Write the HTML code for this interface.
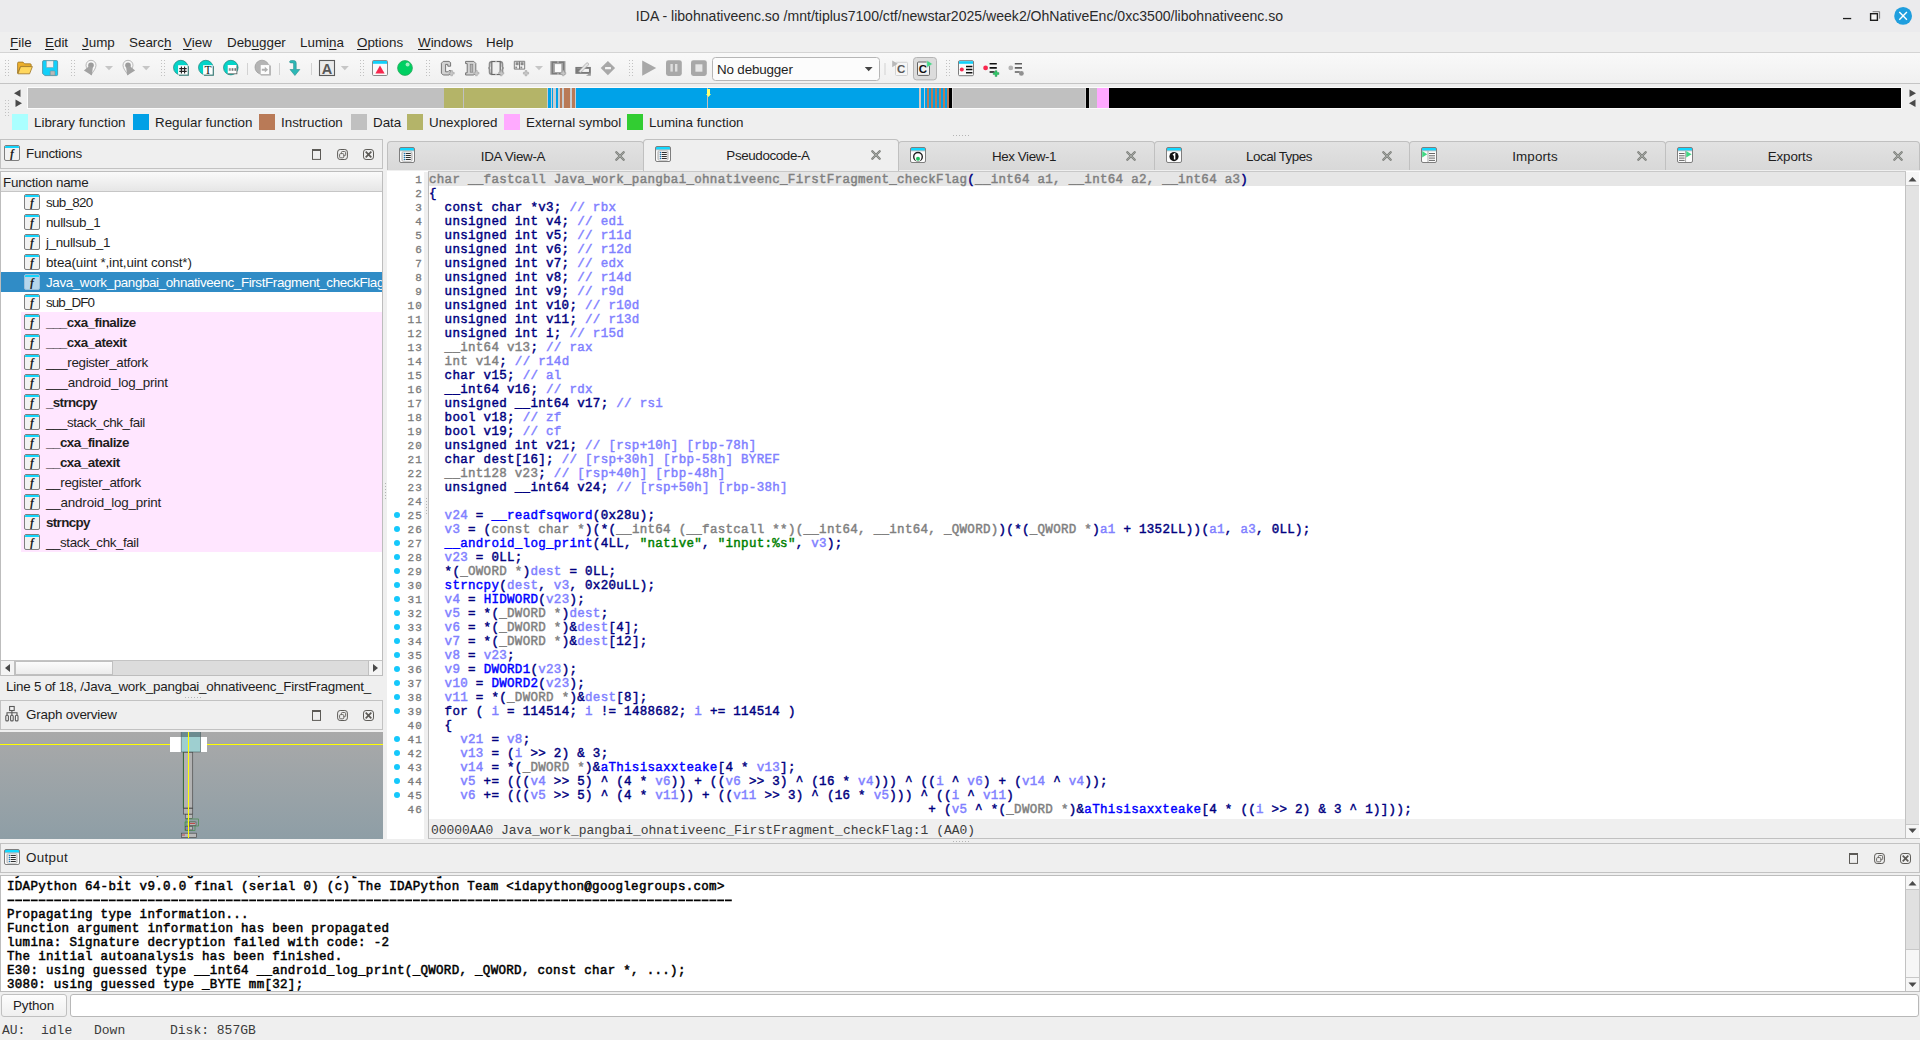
<!DOCTYPE html>
<html><head><meta charset="utf-8"><title>IDA</title>
<style>
*{box-sizing:border-box;margin:0;padding:0}
html,body{width:1920px;height:1040px;overflow:hidden;background:#efefef}
body{position:relative;font-family:"Liberation Sans",sans-serif;font-size:13px;color:#232323}
.a{position:absolute}
div,span,i,b,u,svg{position:absolute}
span{position:static}
.t{white-space:pre;line-height:16px;height:16px;margin-top:1px}
/* title */
#title{left:0;top:0;width:1920px;height:32px;background:#ebebed}
#title .t{left:0;width:1919px;text-align:center;top:7px;font-size:14.07px;color:#2a2a2a}
/* menu */
#menu{left:0;top:32px;width:1920px;height:20px;background:#efefef}
#menu .t{top:2px;font-size:13.4px;color:#1e1e1e}
#menu u{position:static;text-decoration:underline;text-underline-offset:1.5px;text-decoration-thickness:1.4px}
/* toolbar */
#tb{left:0;top:52px;width:1920px;height:32px;background:linear-gradient(#f9f9f9,#f0f0f0);border-top:1px solid #d4d4d4;border-bottom:1px solid #c4c4c4}
.grip{width:4px;height:18px;top:59px;background-image:radial-gradient(circle,#b8b8b8 0.7px,transparent 0.9px);background-size:2px 2px}
.vsep{width:1px;height:18px;top:59px;background:#c8c8c8}
.dd{width:0;height:0;border-left:3.5px solid transparent;border-right:3.5px solid transparent;border-top:4px solid #c4c4c4;top:67px}
/* nav */
#nav{left:28px;top:88px;width:1873px;height:20px;background:#000}
#nav div{top:0;height:20px}
.sw{width:16px;height:16px;top:114px}
.lg{top:114px;font-size:13.4px;color:#1e1e1e}
/* dock titles */
.dt{background:#efefef;border:1px solid #c2c2c2;height:30px}
.dt .t{left:25px;top:5px;font-size:13.4px;color:#1e1e1e}
/* functions */
#fl{left:0;top:171px;width:383px;height:505px;background:#fff;border:1px solid #bdbdbd;overflow:hidden}
#fh{left:0;top:0;width:381px;height:20px;background:linear-gradient(#fafafa,#f0f0f0 50%,#e6e6e6);border-bottom:1px solid #c6c6c6}
#fh .t{left:2px;top:2px;font-size:13.4px;color:#1e1e1e}
.fr{left:1px;width:381px;height:20px}
.fr.pk{background:linear-gradient(90deg,#fff 20px,#ffe6ff 20px)}
.fr.sel{background:#308cc6}
.fi{left:23px;top:2px;width:16px;height:16px;border:1px solid #7e7e7e;border-radius:2px;background:#f2f2f2;overflow:hidden}
.fi b{left:0;top:0;width:14px;height:2.4px;background:#14d4fc}
.fi u{left:0;top:2px;width:14px;text-align:center;text-decoration:none;font-family:"Liberation Serif",serif;font-style:italic;font-weight:bold;font-size:11.5px;line-height:12px;color:#222}
.fr.sel .fi{background:#b6d6ec;border-color:#9cc0da}
.ft{position:absolute;left:45px;top:3px;white-space:pre;line-height:16px;font-size:13.4px;color:#1e1e1e}
.ft.bd{font-weight:bold}
.fr.sel .ft{color:#fff}
/* code */
#cv{left:387px;top:171px;width:1533px;height:668px;background:#fff}
.hl{left:429px;width:1476px;height:14px;background:#e6e6e6}
.ln{left:386px;margin-top:1.3px;width:37px;text-align:right;height:14px;line-height:14px;font-family:"Liberation Mono",monospace;font-size:11px;letter-spacing:1.2px;color:#7a7a7a;-webkit-text-stroke:0.3px}
.dot{left:394px;width:6px;height:6px;border-radius:3px;background:#14c8fc}
.cl{left:429px;margin-top:1px;height:14px;line-height:14px;font-family:"Liberation Mono",monospace;font-size:12.5px;letter-spacing:0.3px;white-space:pre;font-weight:normal;-webkit-text-stroke:0.45px}
.k{color:#000080}.g{color:#808080}.c,.v{color:#8080ff}.f{color:#0000ff}.s{color:#008000}
/* output */
#ov{left:1px;top:876px;width:1904px;height:115px;background:#fff;overflow:hidden}
.ol{left:6px;height:14px;line-height:14px;font-family:"Liberation Mono",monospace;font-size:12.5px;letter-spacing:0.3px;-webkit-text-stroke:0.5px;color:#000;white-space:pre}
.mono{font-family:"Liberation Mono",monospace;font-size:13px;white-space:pre;line-height:14px}
/* scrollbars */
.sbv{width:14px;background:#e3e3e3;border-left:1px solid #c2c2c2}
.tab{top:141px;height:29px;background:linear-gradient(#e2e2e2,#d8d8d8);border:1px solid #c0c0c0;border-bottom:none;border-radius:4px 4px 0 0}
.tab.act{top:139px;height:32px;background:#efefef}
.tab .t{font-size:13.4px;color:#1e1e1e;top:7px;text-align:center;width:140px}
.tab.act .t{top:9px}
#dtF{letter-spacing:-0.229px}#fhn{letter-spacing:-0.237px}#dtG{letter-spacing:-0.213px}#dtO{letter-spacing:0.299px}#py{letter-spacing:-0.117px}#fstat{letter-spacing:-0.223px}#tab0{letter-spacing:-0.298px}#tab1{letter-spacing:-0.379px}#tab2{letter-spacing:-0.423px}#tab3{letter-spacing:-0.474px}#tab4{letter-spacing:0.135px}#tab5{letter-spacing:-0.101px}#nodbg{letter-spacing:-0.158px}</style></head><body>

<!-- ===== title bar ===== -->
<div id="title"><div class="t" id="ttl">IDA - libohnativeenc.so /mnt/tiplus7100/ctf/newstar2025/week2/OhNativeEnc/0xc3500/libohnativeenc.so</div>
<svg style="left:1836px;top:0px" width="84" height="32" viewBox="1836 0 84 32">
<rect x="1843" y="17.9" width="8.2" height="1.3" fill="#1e1e1e"/>
<path d="M1872.6 11.7h7v7" fill="none" stroke="#7a7a7a" stroke-width="1"/>
<rect x="1870.6" y="13.7" width="6.8" height="6.6" fill="#f6f6f6" stroke="#1e1e1e" stroke-width="1.4"/>
<circle cx="1903.1" cy="15.9" r="8.9" fill="#1f9ede"/><path d="M1899.3 12.1l7.6 7.6M1906.9 12.1l-7.6 7.6" stroke="#fff" stroke-width="1.4"/>
</svg></div>

<!-- ===== menu ===== -->
<div id="menu">
<div class="t" style="left:10px"><u>F</u>ile</div>
<div class="t" style="left:45px"><u>E</u>dit</div>
<div class="t" style="left:82px"><u>J</u>ump</div>
<div class="t" style="left:129px">Searc<u>h</u></div>
<div class="t" style="left:183px"><u>V</u>iew</div>
<div class="t" style="left:227px">Deb<u>u</u>gger</div>
<div class="t" style="left:300px">Lumi<u>n</u>a</div>
<div class="t" style="left:357px"><u>O</u>ptions</div>
<div class="t" style="left:418px"><u>W</u>indows</div>
<div class="t" style="left:486px">Help</div>
</div>

<!-- ===== toolbar ===== -->
<div id="tb"></div>
<svg style="left:0;top:53px" width="1040" height="31" viewBox="0 53 1040 31"><rect x="5" y="60" width="1" height="1" fill="#c2c2c2"/><rect x="8" y="60" width="1" height="1" fill="#c2c2c2"/><rect x="5" y="63" width="1" height="1" fill="#c2c2c2"/><rect x="8" y="63" width="1" height="1" fill="#c2c2c2"/><rect x="5" y="66" width="1" height="1" fill="#c2c2c2"/><rect x="8" y="66" width="1" height="1" fill="#c2c2c2"/><rect x="5" y="69" width="1" height="1" fill="#c2c2c2"/><rect x="8" y="69" width="1" height="1" fill="#c2c2c2"/><rect x="5" y="72" width="1" height="1" fill="#c2c2c2"/><rect x="8" y="72" width="1" height="1" fill="#c2c2c2"/><rect x="5" y="75" width="1" height="1" fill="#c2c2c2"/><rect x="8" y="75" width="1" height="1" fill="#c2c2c2"/><path d="M17.6 73.3V63.2q0-1.1 1.1-1.1h4.3l1.6 1.7h5.6q1 0 1 1v1.6H20.6z" fill="#edb02c" stroke="#9c7424" stroke-width="0.8"/><path d="M17.9 73.8L20.6 66.6H32.4L29.6 73.8z" fill="#ffd75e" stroke="#9c7424" stroke-width="0.8" stroke-linejoin="round"/><path d="M42.6 61.8q0-1.2 1.2-1.2h12.6q1.2 0 1.2 1.2v12.6q0 1.2-1.2 1.2H45l-2.4-2z" fill="#12d0fa" stroke="#4d96ac" stroke-width="0.9"/><rect x="46.3" y="60.9" width="7" height="6.6" fill="#f0f0f0" stroke="#7a9aa4" stroke-width="0.5"/><rect x="50.2" y="70.9" width="4.8" height="4.4" rx="0.6" fill="#b8b8b8" stroke="#6f8f99" stroke-width="0.6"/><rect x="71" y="60" width="1" height="1" fill="#c2c2c2"/><rect x="74" y="60" width="1" height="1" fill="#c2c2c2"/><rect x="71" y="63" width="1" height="1" fill="#c2c2c2"/><rect x="74" y="63" width="1" height="1" fill="#c2c2c2"/><rect x="71" y="66" width="1" height="1" fill="#c2c2c2"/><rect x="74" y="66" width="1" height="1" fill="#c2c2c2"/><rect x="71" y="69" width="1" height="1" fill="#c2c2c2"/><rect x="74" y="69" width="1" height="1" fill="#c2c2c2"/><rect x="71" y="72" width="1" height="1" fill="#c2c2c2"/><rect x="74" y="72" width="1" height="1" fill="#c2c2c2"/><rect x="71" y="75" width="1" height="1" fill="#c2c2c2"/><rect x="74" y="75" width="1" height="1" fill="#c2c2c2"/><path d="M91 60.3c-3 0-5 2.2-5 5 0 3 2.5 6 5 9.4 2.5-3.4 5-6.4 5-9.4 0-2.8-2-5-5-5z" fill="#f6f6f6" stroke="#a8a8a8" stroke-width="0.8"/><circle cx="91" cy="65.3" r="2.8" fill="#9c9c9c"/><path d="M89.2 66l3.6 1.2 -0.9 8.2 -8 -5z" fill="#a2a2a2"/><path d="M105 66h8l-4 4.3z" fill="#c6c6c6"/><path d="M128 60.3c-3 0-5 2.2-5 5 0 3 2.5 6 5 9.4 2.5-3.4 5-6.4 5-9.4 0-2.8-2-5-5-5z" fill="#f6f6f6" stroke="#a8a8a8" stroke-width="0.8"/><circle cx="128" cy="65.3" r="2.8" fill="#9c9c9c"/><path d="M129.8 66l-3.6 1.2 0.9 8.2 8 -5z" fill="#a2a2a2"/><path d="M142.2 66h8l-4 4.3z" fill="#c6c6c6"/><rect x="161" y="60" width="1" height="1" fill="#c2c2c2"/><rect x="164" y="60" width="1" height="1" fill="#c2c2c2"/><rect x="161" y="63" width="1" height="1" fill="#c2c2c2"/><rect x="164" y="63" width="1" height="1" fill="#c2c2c2"/><rect x="161" y="66" width="1" height="1" fill="#c2c2c2"/><rect x="164" y="66" width="1" height="1" fill="#c2c2c2"/><rect x="161" y="69" width="1" height="1" fill="#c2c2c2"/><rect x="164" y="69" width="1" height="1" fill="#c2c2c2"/><rect x="161" y="72" width="1" height="1" fill="#c2c2c2"/><rect x="164" y="72" width="1" height="1" fill="#c2c2c2"/><rect x="161" y="75" width="1" height="1" fill="#c2c2c2"/><rect x="164" y="75" width="1" height="1" fill="#c2c2c2"/><circle cx="180.8" cy="67.6" r="7.3" fill="#04d4c8" stroke="#1b7f78" stroke-width="0.7"/><rect x="178.9" y="66.2" width="10" height="9.6" fill="#3c7d78"/><rect x="178.1" y="65.2" width="9.6" height="9.4" fill="#fefefe"/><path d="M181.4 66.6v6.8M184.6 66.6v6.8M179.3 68.6h7.4M179.3 71.4h7.4" stroke="#222" stroke-width="1.1" fill="none"/><circle cx="205.8" cy="67.6" r="7.3" fill="#04d4c8" stroke="#1b7f78" stroke-width="0.7"/><rect x="203.9" y="66.2" width="10" height="9.6" fill="#3c7d78"/><rect x="203.1" y="65.2" width="9.6" height="9.4" fill="#fefefe"/><text x="208" y="74" font-family="Liberation Serif" font-size="11.5" text-anchor="middle" fill="#111">T</text><circle cx="230.8" cy="67.6" r="7.3" fill="#04d4c8" stroke="#1b7f78" stroke-width="0.7"/><rect x="227.9" y="65.6" width="9.4" height="8.6" fill="#4a5a58"/><rect x="227.7" y="65" width="8.8" height="8.4" fill="#fefefe"/><path d="M229.3 68.2v2.6M230.9 68.2v2.6M232.5 68.2v2.6M234.1 68.2v2.6M235.5 68.2v2.6" stroke="#777" stroke-width="1"/><rect x="247" y="63" width="1" height="12" fill="#d2d2d2"/><circle cx="262" cy="67.2" r="7" fill="#b4b4b4" stroke="#a0a0a0" stroke-width="0.8"/><rect x="260.8" y="65.5" width="10" height="10" fill="#a8a8a8"/><rect x="260.3" y="64.8" width="9.2" height="9.6" fill="#fdfdfd" stroke="#aaa" stroke-width="0.5"/><path d="M261.8 68.7h3v-1.9l3.3 2.9-3.3 2.9v-1.9h-3z" fill="#b0b0b0"/><rect x="279" y="63" width="1" height="12" fill="#d2d2d2"/><path d="M289.6 61.4q0.8-1.2 2.2-0.9h1.8q2.6 0 2.6 2.6v6.4h3.6l-4.9 6-4.9-6h3.6v-5.6q0-1-1-1h-1.6q-1.6 0-1.4-1.5z" fill="#2cb8b6" stroke="#2a8f8d" stroke-width="0.6"/><rect x="311" y="63" width="1" height="12" fill="#d2d2d2"/><rect x="319.5" y="60.5" width="15" height="15" fill="#ebebeb" stroke="#5a5a5a" stroke-width="1.1"/><text x="327" y="73.6" font-family="Liberation Sans" font-size="14.5" font-weight="bold" text-anchor="middle" fill="#585858">A</text><path d="M340.8 66h8l-4 4.3z" fill="#c6c6c6"/><rect x="360" y="60" width="1" height="1" fill="#c2c2c2"/><rect x="363" y="60" width="1" height="1" fill="#c2c2c2"/><rect x="360" y="63" width="1" height="1" fill="#c2c2c2"/><rect x="363" y="63" width="1" height="1" fill="#c2c2c2"/><rect x="360" y="66" width="1" height="1" fill="#c2c2c2"/><rect x="363" y="66" width="1" height="1" fill="#c2c2c2"/><rect x="360" y="69" width="1" height="1" fill="#c2c2c2"/><rect x="363" y="69" width="1" height="1" fill="#c2c2c2"/><rect x="360" y="72" width="1" height="1" fill="#c2c2c2"/><rect x="363" y="72" width="1" height="1" fill="#c2c2c2"/><rect x="360" y="75" width="1" height="1" fill="#c2c2c2"/><rect x="363" y="75" width="1" height="1" fill="#c2c2c2"/><rect x="372.5" y="60.5" width="15" height="15" rx="1.2" fill="#fafafa" stroke="#7c7c7c" stroke-width="0.9"/><rect x="373" y="61" width="14" height="2.8" fill="#12d0fa"/><path d="M380 65.6l4.6 8h-9.2z" fill="#f8284e"/><circle cx="405" cy="68" r="7.4" fill="#00d062" stroke="#2aa85c" stroke-width="0.8"/><circle cx="407.6" cy="64.6" r="2" fill="#a0f0c0"/><rect x="426" y="60" width="1" height="1" fill="#c2c2c2"/><rect x="429" y="60" width="1" height="1" fill="#c2c2c2"/><rect x="426" y="63" width="1" height="1" fill="#c2c2c2"/><rect x="429" y="63" width="1" height="1" fill="#c2c2c2"/><rect x="426" y="66" width="1" height="1" fill="#c2c2c2"/><rect x="429" y="66" width="1" height="1" fill="#c2c2c2"/><rect x="426" y="69" width="1" height="1" fill="#c2c2c2"/><rect x="429" y="69" width="1" height="1" fill="#c2c2c2"/><rect x="426" y="72" width="1" height="1" fill="#c2c2c2"/><rect x="429" y="72" width="1" height="1" fill="#c2c2c2"/><rect x="426" y="75" width="1" height="1" fill="#c2c2c2"/><rect x="429" y="75" width="1" height="1" fill="#c2c2c2"/><path d="M443.2 61.4h5.8l1.6 1.2v3.6h-2.8v-1.8h-2.2v7.4h2.2l1.2-1.2h1.8v2.8l-1.6 1.6h-6l-1.8-1.8v-10z" fill="#d2d2d2" stroke="#6a6a6a" stroke-width="0.9" stroke-linejoin="round"/><path d="M449 72.3h1.7v-1.7h1.8v1.7h1.7v1.8h-1.7v1.7h-1.8v-1.7h-1.7z" fill="#c8c8c8" stroke="#9a9a9a" stroke-width="0.5"/><path d="M465.6 61.4h8.2l2 2v9.6l-2 2h-8.2v-2.2h1.6v-9.2h-1.6z" fill="#d2d2d2" stroke="#6a6a6a" stroke-width="0.9" stroke-linejoin="round"/><rect x="470.2" y="64.2" width="2.6" height="8" fill="#b4b4b4" stroke="#7a7a7a" stroke-width="0.6"/><path d="M473.8 72.3h1.7v-1.7h1.8v1.7h1.7v1.8h-1.7v1.7h-1.8v-1.7h-1.7z" fill="#c8c8c8" stroke="#9a9a9a" stroke-width="0.5"/><path d="M491.6 61.6q-2 0.4-2 2.4v2.4q0 1.4-1.2 1.6 1.2 0.2 1.2 1.6v2.4q0 2 2 2.4M500.4 61.6q2 0.4 2 2.4v2.4q0 1.4 1.2 1.6-1.2 0.2-1.2 1.6v2.4q0 2-2 2.4" fill="none" stroke="#8e8e8e" stroke-width="1.8"/><rect x="491.8" y="61.5" width="8.4" height="13" fill="#f0f0f0" stroke="#666" stroke-width="1.2"/><path d="M495.4 61.5h1.2M495.4 74.5h1.2" stroke="#d0d0d0" stroke-width="1.2"/><path d="M498.6 72.3h1.7v-1.7h1.8v1.7h1.7v1.8h-1.7v1.7h-1.8v-1.7h-1.7z" fill="#c8c8c8" stroke="#9a9a9a" stroke-width="0.5"/><path d="M514.3 61.3h10.4v7.8h-10.4zM519.5 61.3v7.8" fill="#f4f4f4" stroke="#7e7e7e" stroke-width="1"/><rect x="515.6" y="62.2" width="3" height="3" fill="#8a8a8a"/><rect x="520.6" y="62.2" width="3" height="3" fill="#8a8a8a"/><rect x="515.3" y="66.6" width="1.8" height="1.8" fill="#8a8a8a"/><rect x="520.4" y="66.6" width="1.8" height="1.8" fill="#8a8a8a"/><path d="M523.4 72.3h1.7v-1.7h1.8v1.7h1.7v1.8h-1.7v1.7h-1.8v-1.7h-1.7z" fill="#c8c8c8" stroke="#9a9a9a" stroke-width="0.5"/><path d="M535 66h8l-4 4.3z" fill="#c6c6c6"/><rect x="550.3" y="61.1" width="15.2" height="13.6" fill="#a4a4a4"/><path d="M557 62.2h-4.6v11.4h4.6M559 62.2h4.6v11.4h-4.6" fill="none" stroke="#7c7c7c" stroke-width="1.4"/><rect x="554.9" y="64.1" width="6.4" height="7.9" fill="#fbfbfb"/><path d="M560.6 72.3h1.7v-1.7h1.8v1.7h1.7v1.8h-1.7v1.7h-1.8v-1.7h-1.7z" fill="#c8c8c8" stroke="#9a9a9a" stroke-width="0.5"/><rect x="576.3" y="67.9" width="13.6" height="5" fill="#f4f4f4" stroke="#7a7a7a" stroke-width="1.9"/><path d="M576 69h6v4h-6z" fill="#7a7a7a"/><path d="M578.6 71.4l7.6-8.2q1-0.9 2 0 0.9 1 0 2l-7.4 7.4z" fill="#e4e4e4" stroke="#a4a4a4" stroke-width="0.7"/><path d="M590.9 72.6v3.2h-5z" fill="#9a9a9a"/><path d="M607.9 60.9l7.2 7.2-7.2 7.2-7.2-7.2z" fill="#a8a8a8"/><rect x="605" y="67" width="6" height="2.2" rx="0.5" fill="#f4f4f4"/><rect x="629" y="60" width="1" height="1" fill="#c2c2c2"/><rect x="632" y="60" width="1" height="1" fill="#c2c2c2"/><rect x="629" y="63" width="1" height="1" fill="#c2c2c2"/><rect x="632" y="63" width="1" height="1" fill="#c2c2c2"/><rect x="629" y="66" width="1" height="1" fill="#c2c2c2"/><rect x="632" y="66" width="1" height="1" fill="#c2c2c2"/><rect x="629" y="69" width="1" height="1" fill="#c2c2c2"/><rect x="632" y="69" width="1" height="1" fill="#c2c2c2"/><rect x="629" y="72" width="1" height="1" fill="#c2c2c2"/><rect x="632" y="72" width="1" height="1" fill="#c2c2c2"/><rect x="629" y="75" width="1" height="1" fill="#c2c2c2"/><rect x="632" y="75" width="1" height="1" fill="#c2c2c2"/><path d="M642.2 60.4l14 7.6-14 7.8z" fill="#a8a8a8"/><rect x="666" y="60.2" width="15.8" height="15.8" rx="2.4" fill="#a8a8a8"/><rect x="670.4" y="64" width="2.4" height="7.6" fill="#dedede"/><rect x="675" y="64" width="2.4" height="7.6" fill="#dedede"/><rect x="691" y="60.2" width="15.8" height="15.8" rx="2.4" fill="#a8a8a8"/><rect x="695.4" y="64.3" width="7" height="7.4" fill="#e6e6e6"/><rect x="712.5" y="57.5" width="167" height="23" rx="3" fill="#fcfcfc" stroke="#b6b6b6"/><path d="M864.8 67h7.8l-3.9 4.2z" fill="#444"/><rect x="884.5" y="63" width="1" height="12" fill="#d2d2d2"/><rect x="895.5" y="62.3" width="12" height="13.2" rx="1" fill="#f6f6f6" stroke="#cfcfcf" stroke-width="0.9"/><text x="901.2" y="73.4" font-family="Liberation Sans" font-size="11.5" font-weight="bold" text-anchor="middle" fill="#5a5a5a">C</text><path d="M892.2 60.6l5.6 3.2-5.6 3.4z" fill="#b8b8b8"/><rect x="913.5" y="57.5" width="23" height="22.4" rx="3" fill="#dcdcdc" stroke="#b4b4b4"/><rect x="917.5" y="62" width="12" height="13.4" rx="1" fill="#f2f2f2" stroke="#555" stroke-width="0.9"/><text x="922.8" y="73.4" font-family="Liberation Sans" font-size="11.5" font-weight="bold" text-anchor="middle" fill="#111">C</text><path d="M926.8 60.5l5.8 3.4-5.8 3.5z" fill="#40d884" stroke="#dcdcdc" stroke-width="0.5"/><rect x="946" y="60" width="1" height="1" fill="#c2c2c2"/><rect x="949" y="60" width="1" height="1" fill="#c2c2c2"/><rect x="946" y="63" width="1" height="1" fill="#c2c2c2"/><rect x="949" y="63" width="1" height="1" fill="#c2c2c2"/><rect x="946" y="66" width="1" height="1" fill="#c2c2c2"/><rect x="949" y="66" width="1" height="1" fill="#c2c2c2"/><rect x="946" y="69" width="1" height="1" fill="#c2c2c2"/><rect x="949" y="69" width="1" height="1" fill="#c2c2c2"/><rect x="946" y="72" width="1" height="1" fill="#c2c2c2"/><rect x="949" y="72" width="1" height="1" fill="#c2c2c2"/><rect x="946" y="75" width="1" height="1" fill="#c2c2c2"/><rect x="949" y="75" width="1" height="1" fill="#c2c2c2"/><rect x="958.5" y="60.7" width="15" height="15" rx="1.2" fill="#fafafa" stroke="#6e6e6e" stroke-width="0.9"/><rect x="959" y="61.2" width="14" height="2.6" fill="#12d0fa"/><circle cx="961.8" cy="69.6" r="2" fill="#f8284e"/><path d="M966 66.4h6.4M966 69.6h6.4M966 72.8h6.4" stroke="#111" stroke-width="1.5"/><circle cx="985.6" cy="67.9" r="2.4" fill="#f8284e"/><path d="M989.6 63.8h7.2M989.6 67.9h7.2M989.6 72h5" stroke="#111" stroke-width="1.6"/><path d="M993.2 72.6h1.9v-1.9h1.9v1.9h1.9v1.9h-1.9v1.9h-1.9v-1.9h-1.9z" fill="#30c868" stroke="#208848" stroke-width="0.4"/><circle cx="1010.8" cy="67.9" r="2.4" fill="#b4b4b4"/><path d="M1014.8 63.8h7.2M1014.8 67.9h7.2M1014.8 72h5" stroke="#5e5e5e" stroke-width="1.6"/><circle cx="1021.4" cy="73.4" r="2.4" fill="#909090"/></svg><div class="t" style="left:717px;top:61px;font-size:13.4px;color:#1e1e1e" id="nodbg">No debugger</div>

<!-- ===== nav band ===== -->
<svg style="left:12px;top:88px" width="12" height="20" viewBox="0 0 12 20"><path d="M8.5 1.5v7.5l-6.5-3.7z M3.5 11.5v7.5l6.5-3.7z" fill="#4a4a4a"/></svg>
<svg style="left:1907px;top:88px" width="12" height="20" viewBox="0 0 12 20"><path d="M2.5 1.5v7.5l6.5-3.7z M8.5 11.5v7.5l-6.5-3.7z" fill="#4a4a4a"/></svg>
<svg style="left:5px;top:100px" width="5" height="18"><rect x="0" y="0" width="1" height="1" fill="#c2c2c2"/><rect x="3" y="0" width="1" height="1" fill="#c2c2c2"/><rect x="0" y="3" width="1" height="1" fill="#c2c2c2"/><rect x="3" y="3" width="1" height="1" fill="#c2c2c2"/><rect x="0" y="6" width="1" height="1" fill="#c2c2c2"/><rect x="3" y="6" width="1" height="1" fill="#c2c2c2"/><rect x="0" y="9" width="1" height="1" fill="#c2c2c2"/><rect x="3" y="9" width="1" height="1" fill="#c2c2c2"/><rect x="0" y="12" width="1" height="1" fill="#c2c2c2"/><rect x="3" y="12" width="1" height="1" fill="#c2c2c2"/><rect x="0" y="15" width="1" height="1" fill="#c2c2c2"/><rect x="3" y="15" width="1" height="1" fill="#c2c2c2"/></svg>
<div style="left:27px;top:87px;width:1875px;height:22px;background:#fbfbfb"></div><svg style="left:0;top:88px" width="1920" height="20" viewBox="0 0 1920 20" shape-rendering="crispEdges"><rect x="28" y="0" width="416" height="20" fill="#c0c0c0"/><rect x="444" y="0" width="19" height="20" fill="#b4b468"/><rect x="463" y="0" width="1" height="20" fill="#c0c0c0"/><rect x="464" y="0" width="83" height="20" fill="#b4b468"/><rect x="547" y="0" width="1" height="20" fill="#c8ccd0"/><rect x="548" y="0" width="3" height="20" fill="#00a2e8"/><rect x="551" y="0" width="1" height="20" fill="#c8ccd0"/><rect x="552" y="0" width="1" height="20" fill="#00a2e8"/><rect x="553" y="0" width="3" height="20" fill="#c8ccd0"/><rect x="556" y="0" width="2" height="20" fill="#00a2e8"/><rect x="558" y="0" width="2" height="20" fill="#c8ccd0"/><rect x="560" y="0" width="2" height="20" fill="#b97a57"/><rect x="562" y="0" width="2" height="20" fill="#c8ccd0"/><rect x="564" y="0" width="6" height="20" fill="#b97a57"/><rect x="570" y="0" width="2" height="20" fill="#c8ccd0"/><rect x="572" y="0" width="3" height="20" fill="#b97a57"/><rect x="575" y="0" width="1" height="20" fill="#c8ccd0"/><rect x="576" y="0" width="131" height="20" fill="#00a2e8"/><rect x="707" y="0" width="1" height="20" fill="#c0c0c0"/><rect x="708" y="0" width="211" height="20" fill="#00a2e8"/><rect x="919" y="0" width="2" height="20" fill="#d8c8c0"/><rect x="921" y="0" width="3" height="20" fill="#00a2e8"/><rect x="924" y="0" width="1" height="20" fill="#c8ccd0"/><rect x="925" y="0" width="2" height="20" fill="#00a2e8"/><rect x="927" y="0" width="2" height="20" fill="#b97a57"/><rect x="929" y="0" width="2" height="20" fill="#00a2e8"/><rect x="931" y="0" width="2" height="20" fill="#b97a57"/><rect x="933" y="0" width="2" height="20" fill="#00a2e8"/><rect x="935" y="0" width="2" height="20" fill="#b97a57"/><rect x="937" y="0" width="2" height="20" fill="#00a2e8"/><rect x="939" y="0" width="2" height="20" fill="#b97a57"/><rect x="941" y="0" width="2" height="20" fill="#00a2e8"/><rect x="943" y="0" width="2" height="20" fill="#b97a57"/><rect x="945" y="0" width="2" height="20" fill="#00a2e8"/><rect x="947" y="0" width="2" height="20" fill="#b97a57"/><rect x="949" y="0" width="3" height="20" fill="#000"/><rect x="952" y="0" width="1" height="20" fill="#d8d8d8"/><rect x="953" y="0" width="132" height="20" fill="#c0c0c0"/><rect x="1085" y="0" width="1" height="20" fill="#d0d0d0"/><rect x="1086" y="0" width="3" height="20" fill="#000"/><rect x="1089" y="0" width="1" height="20" fill="#d0d0d0"/><rect x="1090" y="0" width="7" height="20" fill="#c0c0c0"/><rect x="1097" y="0" width="12" height="20" fill="#ffa8ff"/><rect x="1109" y="0" width="792" height="20" fill="#000"/><path d="M707 1h3v5h1l-2.5 3-2.5-3h1z" fill="#ffff70" shape-rendering="auto"/></svg>
<!-- legend -->
<div class="sw" style="left:12px;background:#aaffff"></div><div class="t lg" style="left:34px">Library function</div>
<div class="sw" style="left:133px;background:#00a0e6"></div><div class="t lg" style="left:155px">Regular function</div>
<div class="sw" style="left:259px;background:#b97a57"></div><div class="t lg" style="left:281px">Instruction</div>
<div class="sw" style="left:351px;background:#c0c0c0"></div><div class="t lg" style="left:373px">Data</div>
<div class="sw" style="left:407px;background:#b4b469"></div><div class="t lg" style="left:429px">Unexplored</div>
<div class="sw" style="left:504px;background:#ffaaff"></div><div class="t lg" style="left:526px">External symbol</div>
<div class="sw" style="left:627px;background:#32cd32"></div><div class="t lg" style="left:649px">Lumina function</div>

<!-- ===== Functions dock ===== -->
<div class="dt" style="left:0;top:139px;width:383px"><div class="t" id="dtF">Functions</div></div>
<div id="fl"><div id="fh"><div class="t" id="fhn">Function name</div></div>
<div style="left:-1px;top:-172px;width:383px;height:700px">
<div class="fr" style="top:192px"><i class="fi"><b></b><u>f</u></i><span class="ft" id="fn0" style="letter-spacing:-0.699px">sub_820</span></div>
<div class="fr" style="top:212px"><i class="fi"><b></b><u>f</u></i><span class="ft" id="fn1" style="letter-spacing:-0.344px">nullsub_1</span></div>
<div class="fr" style="top:232px"><i class="fi"><b></b><u>f</u></i><span class="ft" id="fn2" style="letter-spacing:-0.342px">j_nullsub_1</span></div>
<div class="fr" style="top:252px"><i class="fi"><b></b><u>f</u></i><span class="ft" id="fn3" style="letter-spacing:-0.138px">btea(uint *,int,uint const*)</span></div>
<div class="fr sel" style="top:272px"><i class="fi"><b></b><u>f</u></i><span class="ft" id="fn4" style="letter-spacing:-0.378px">Java_work_pangbai_ohnativeenc_FirstFragment_checkFlag</span></div>
<div class="fr" style="top:292px"><i class="fi"><b></b><u>f</u></i><span class="ft" id="fn5" style="letter-spacing:-0.906px">sub_DF0</span></div>
<div class="fr pk" style="top:312px"><i class="fi"><b></b><u>f</u></i><span class="ft bd" id="fn6" style="letter-spacing:-0.519px">___cxa_finalize</span></div>
<div class="fr pk" style="top:332px"><i class="fi"><b></b><u>f</u></i><span class="ft bd" id="fn7" style="letter-spacing:-0.510px">___cxa_atexit</span></div>
<div class="fr pk" style="top:352px"><i class="fi"><b></b><u>f</u></i><span class="ft" id="fn8" style="letter-spacing:-0.344px">___register_atfork</span></div>
<div class="fr pk" style="top:372px"><i class="fi"><b></b><u>f</u></i><span class="ft" id="fn9" style="letter-spacing:-0.204px">___android_log_print</span></div>
<div class="fr pk" style="top:392px"><i class="fi"><b></b><u>f</u></i><span class="ft bd" id="fn10" style="letter-spacing:-0.635px">_strncpy</span></div>
<div class="fr pk" style="top:412px"><i class="fi"><b></b><u>f</u></i><span class="ft" id="fn11" style="letter-spacing:-0.453px">___stack_chk_fail</span></div>
<div class="fr pk" style="top:432px"><i class="fi"><b></b><u>f</u></i><span class="ft bd" id="fn12" style="letter-spacing:-0.506px">__cxa_finalize</span></div>
<div class="fr pk" style="top:452px"><i class="fi"><b></b><u>f</u></i><span class="ft bd" id="fn13" style="letter-spacing:-0.493px">__cxa_atexit</span></div>
<div class="fr pk" style="top:472px"><i class="fi"><b></b><u>f</u></i><span class="ft" id="fn14" style="letter-spacing:-0.323px">__register_atfork</span></div>
<div class="fr pk" style="top:492px"><i class="fi"><b></b><u>f</u></i><span class="ft" id="fn15" style="letter-spacing:-0.178px">__android_log_print</span></div>
<div class="fr pk" style="top:512px"><i class="fi"><b></b><u>f</u></i><span class="ft bd" id="fn16" style="letter-spacing:-0.661px">strncpy</span></div>
<div class="fr pk" style="top:532px"><i class="fi"><b></b><u>f</u></i><span class="ft" id="fn17" style="letter-spacing:-0.406px">__stack_chk_fail</span></div>
</div>
</div>
<!-- h scrollbar -->
<div style="left:1px;top:660px;width:381px;height:15px;background:#dcdcdc;border-top:1px solid #c4c4c4"></div>
<div style="left:15px;top:661px;width:98px;height:14px;background:linear-gradient(#fcfcfc,#ececec);border:1px solid #c0c0c0"></div>
<div style="left:1px;top:661px;width:14px;height:14px;background:#f4f4f4;border-right:1px solid #c0c0c0"></div>
<div style="left:368px;top:661px;width:14px;height:14px;background:#f4f4f4;border-left:1px solid #c0c0c0"></div>
<svg style="left:4px;top:663px" width="8" height="10"><path d="M6 1v8L1 5z" fill="#4a4a4a"/></svg>
<svg style="left:371px;top:663px" width="8" height="10"><path d="M2 1v8l5-4z" fill="#4a4a4a"/></svg>
<div class="t" style="left:6px;top:678px;font-size:13.4px;color:#1e1e1e" id="fstat">Line 5 of 18, /Java_work_pangbai_ohnativeenc_FirstFragment_</div>

<!-- ===== Graph overview dock ===== -->
<div class="dt" style="left:0;top:700px;width:383px"><div class="t" id="dtG">Graph overview</div></div>
<div style="left:0;top:732px;width:383px;height:107px;background:linear-gradient(#a9a9a9,#8e9ea6)" id="go"></div>

<!-- ===== tabs ===== -->
<div style="left:387px;top:169px;width:1533px;height:1px;background:#bfbfbf"></div><div class="tab" style="left:387px;width:257px"><svg width="16" height="16" viewBox="0 0 16 16" style="left:11px;top:5px"><rect x="0.5" y="0.5" width="15" height="15" rx="1.5" fill="#fcfcfc"/><rect x="1" y="1" width="14" height="2.5" fill="#12d8ff"/><path d="M1 3.8h14" stroke="#6e8890" stroke-width="0.5"/><rect x="0.5" y="0.5" width="15" height="15" rx="1.5" fill="none" stroke="#7e7e7e" stroke-width="1"/><rect x="2.7" y="4.6" width="10.6" height="9.8" rx="1.6" fill="#cecece" stroke="#aeaeae" stroke-width="0.5"/><rect x="4.2" y="5.2" width="7.8" height="8.8" rx="0.8" fill="#f4f4f4"/><circle cx="5.5" cy="6.5" r="0.8" fill="#1a78b8"/><path d="M7.2 6.5h4.2" stroke="#1a1a1a" stroke-width="0.9" stroke-linecap="round"/><circle cx="5.5" cy="8.5" r="0.8" fill="#1a78b8"/><path d="M7.2 8.5h4.2" stroke="#1a1a1a" stroke-width="0.9" stroke-linecap="round"/><circle cx="5.5" cy="10.5" r="0.8" fill="#1a78b8"/><path d="M7.2 10.5h4.2" stroke="#1a1a1a" stroke-width="0.9" stroke-linecap="round"/><circle cx="5.5" cy="12.5" r="0.8" fill="#1a78b8"/><path d="M7.2 12.5h4.2" stroke="#1a1a1a" stroke-width="0.9" stroke-linecap="round"/></svg><div class="t" id="tab0" style="left:55px;top:6px">IDA View-A</div><svg width="12" height="12" viewBox="0 0 12 12" style="left:226px;top:8px"><path d="M2.3 2.3l7.4 7.4M9.7 2.3l-7.4 7.4" stroke="#7c7e7a" stroke-width="2.3" stroke-linecap="round"/><path d="M2.5 2.5l7 7M9.5 2.5l-7 7" stroke="#b2b6b2" stroke-width="0.7" stroke-linecap="round"/></svg></div><div class="tab act" style="left:643px;width:256px"><svg width="16" height="16" viewBox="0 0 16 16" style="left:11px;top:6px"><rect x="0.5" y="0.5" width="15" height="15" rx="1.5" fill="#fcfcfc"/><rect x="1" y="1" width="14" height="2.5" fill="#12d8ff"/><path d="M1 3.8h14" stroke="#6e8890" stroke-width="0.5"/><rect x="0.5" y="0.5" width="15" height="15" rx="1.5" fill="none" stroke="#7e7e7e" stroke-width="1"/><rect x="2.7" y="4.6" width="10.6" height="9.8" rx="1.6" fill="#cecece" stroke="#aeaeae" stroke-width="0.5"/><rect x="4.2" y="5.2" width="7.8" height="8.8" rx="0.8" fill="#f4f4f4"/><circle cx="5.5" cy="6.5" r="0.8" fill="#1a78b8"/><path d="M7.2 6.5h4.2" stroke="#1a1a1a" stroke-width="0.9" stroke-linecap="round"/><circle cx="5.5" cy="8.5" r="0.8" fill="#1a78b8"/><path d="M7.2 8.5h4.2" stroke="#1a1a1a" stroke-width="0.9" stroke-linecap="round"/><circle cx="5.5" cy="10.5" r="0.8" fill="#1a78b8"/><path d="M7.2 10.5h4.2" stroke="#1a1a1a" stroke-width="0.9" stroke-linecap="round"/><circle cx="5.5" cy="12.5" r="0.8" fill="#1a78b8"/><path d="M7.2 12.5h4.2" stroke="#1a1a1a" stroke-width="0.9" stroke-linecap="round"/></svg><div class="t" id="tab1" style="left:54px;top:7px">Pseudocode-A</div><svg width="12" height="12" viewBox="0 0 12 12" style="left:226px;top:9px"><path d="M2.3 2.3l7.4 7.4M9.7 2.3l-7.4 7.4" stroke="#7c7e7a" stroke-width="2.3" stroke-linecap="round"/><path d="M2.5 2.5l7 7M9.5 2.5l-7 7" stroke="#b2b6b2" stroke-width="0.7" stroke-linecap="round"/></svg></div><div class="tab" style="left:898px;width:257px"><svg width="16" height="16" viewBox="0 0 16 16" style="left:11px;top:5px"><rect x="0.5" y="0.5" width="15" height="15" rx="1.5" fill="#fcfcfc"/><rect x="1" y="1" width="14" height="2.5" fill="#12d8ff"/><path d="M1 3.8h14" stroke="#6e8890" stroke-width="0.5"/><rect x="0.5" y="0.5" width="15" height="15" rx="1.5" fill="none" stroke="#7e7e7e" stroke-width="1"/><circle cx="8" cy="9.8" r="4.3" fill="#fff" stroke="#222" stroke-width="1.4"/><circle cx="8" cy="11.8" r="2.7" fill="#fff"/><circle cx="8" cy="11.8" r="2" fill="#20c060"/></svg><div class="t" id="tab2" style="left:55px;top:6px">Hex View-1</div><svg width="12" height="12" viewBox="0 0 12 12" style="left:226px;top:8px"><path d="M2.3 2.3l7.4 7.4M9.7 2.3l-7.4 7.4" stroke="#7c7e7a" stroke-width="2.3" stroke-linecap="round"/><path d="M2.5 2.5l7 7M9.5 2.5l-7 7" stroke="#b2b6b2" stroke-width="0.7" stroke-linecap="round"/></svg></div><div class="tab" style="left:1154px;width:256px"><svg width="16" height="16" viewBox="0 0 16 16" style="left:11px;top:5px"><rect x="0.5" y="0.5" width="15" height="15" rx="1.5" fill="#fcfcfc"/><rect x="1" y="1" width="14" height="2.5" fill="#12d8ff"/><path d="M1 3.8h14" stroke="#6e8890" stroke-width="0.5"/><rect x="0.5" y="0.5" width="15" height="15" rx="1.5" fill="none" stroke="#7e7e7e" stroke-width="1"/><circle cx="8" cy="9.6" r="4.6" fill="#111"/><path d="M7 8.2l1.6-1.2v5.6" stroke="#fff" stroke-width="1.5" fill="none"/></svg><div class="t" id="tab3" style="left:54px;top:6px">Local Types</div><svg width="12" height="12" viewBox="0 0 12 12" style="left:226px;top:8px"><path d="M2.3 2.3l7.4 7.4M9.7 2.3l-7.4 7.4" stroke="#7c7e7a" stroke-width="2.3" stroke-linecap="round"/><path d="M2.5 2.5l7 7M9.5 2.5l-7 7" stroke="#b2b6b2" stroke-width="0.7" stroke-linecap="round"/></svg></div><div class="tab" style="left:1409px;width:257px"><svg width="16" height="16" viewBox="0 0 16 16" style="left:11px;top:5px"><rect x="0.5" y="0.5" width="15" height="15" rx="1.5" fill="#fcfcfc"/><rect x="1" y="1" width="14" height="2.5" fill="#12d8ff"/><path d="M1 3.8h14" stroke="#6e8890" stroke-width="0.5"/><rect x="0.5" y="0.5" width="15" height="15" rx="1.5" fill="none" stroke="#7e7e7e" stroke-width="1"/><path d="M1.2 4l5 3.2-5 3.2z" fill="#40d884"/><path d="M7 4v11" stroke="#888" stroke-width="0.7"/><path d="M8 6.5h6M8 8.8h6M8 11.1h6M8 13.4h6" stroke="#555" stroke-width="0.9"/></svg><div class="t" id="tab4" style="left:55px;top:6px">Imports</div><svg width="12" height="12" viewBox="0 0 12 12" style="left:226px;top:8px"><path d="M2.3 2.3l7.4 7.4M9.7 2.3l-7.4 7.4" stroke="#7c7e7a" stroke-width="2.3" stroke-linecap="round"/><path d="M2.5 2.5l7 7M9.5 2.5l-7 7" stroke="#b2b6b2" stroke-width="0.7" stroke-linecap="round"/></svg></div><div class="tab" style="left:1665px;width:255px"><svg width="16" height="16" viewBox="0 0 16 16" style="left:11px;top:5px"><rect x="0.5" y="0.5" width="15" height="15" rx="1.5" fill="#fcfcfc"/><rect x="1" y="1" width="14" height="2.5" fill="#12d8ff"/><path d="M1 3.8h14" stroke="#6e8890" stroke-width="0.5"/><rect x="0.5" y="0.5" width="15" height="15" rx="1.5" fill="none" stroke="#7e7e7e" stroke-width="1"/><path d="M9.2 4l5.4 3.2-5.4 3.2z" fill="#40d884"/><path d="M8.6 4v11" stroke="#888" stroke-width="0.7"/><path d="M2 6.5h5.6M2 8.8h5.6M2 11.1h5.6M2 13.4h5.6" stroke="#555" stroke-width="0.9"/></svg><div class="t" id="tab5" style="left:54px;top:6px">Exports</div><svg width="12" height="12" viewBox="0 0 12 12" style="left:226px;top:8px"><path d="M2.3 2.3l7.4 7.4M9.7 2.3l-7.4 7.4" stroke="#7c7e7a" stroke-width="2.3" stroke-linecap="round"/><path d="M2.5 2.5l7 7M9.5 2.5l-7 7" stroke="#b2b6b2" stroke-width="0.7" stroke-linecap="round"/></svg></div>

<!-- ===== code view ===== -->
<div id="cv"></div>
<div style="left:424px;top:172px;width:4px;height:667px;background:#efefef"></div>
<div style="left:428px;top:172px;width:1px;height:667px;background:#bcbcbc"></div>
<div style="left:428px;top:171px;width:1478px;height:1px;background:#c8c8c8"></div>
<div class="hl" style="top:172px"></div>
<div class="ln" style="top:172px">1</div>
<div class="cl" style="top:172px"><span class="g">char __fastcall Java_work_pangbai_ohnativeenc_FirstFragment_checkFlag</span><span class="k">(</span><span class="g">__int64 a1, __int64 a2, __int64 a3</span><span class="k">)</span></div>
<div class="ln" style="top:186px">2</div>
<div class="cl" style="top:186px"><span class="k">{</span></div>
<div class="ln" style="top:200px">3</div>
<div class="cl" style="top:200px"><span class="k">  const char *v3; </span><span class="c">// rbx</span></div>
<div class="ln" style="top:214px">4</div>
<div class="cl" style="top:214px"><span class="k">  unsigned int v4; </span><span class="c">// edi</span></div>
<div class="ln" style="top:228px">5</div>
<div class="cl" style="top:228px"><span class="k">  unsigned int v5; </span><span class="c">// r11d</span></div>
<div class="ln" style="top:242px">6</div>
<div class="cl" style="top:242px"><span class="k">  unsigned int v6; </span><span class="c">// r12d</span></div>
<div class="ln" style="top:256px">7</div>
<div class="cl" style="top:256px"><span class="k">  unsigned int v7; </span><span class="c">// edx</span></div>
<div class="ln" style="top:270px">8</div>
<div class="cl" style="top:270px"><span class="k">  unsigned int v8; </span><span class="c">// r14d</span></div>
<div class="ln" style="top:284px">9</div>
<div class="cl" style="top:284px"><span class="k">  unsigned int v9; </span><span class="c">// r9d</span></div>
<div class="ln" style="top:298px">10</div>
<div class="cl" style="top:298px"><span class="k">  unsigned int v10; </span><span class="c">// r10d</span></div>
<div class="ln" style="top:312px">11</div>
<div class="cl" style="top:312px"><span class="k">  unsigned int v11; </span><span class="c">// r13d</span></div>
<div class="ln" style="top:326px">12</div>
<div class="cl" style="top:326px"><span class="k">  unsigned int i; </span><span class="c">// r15d</span></div>
<div class="ln" style="top:340px">13</div>
<div class="cl" style="top:340px"><span class="g">  __int64 v13</span><span class="k">; </span><span class="c">// rax</span></div>
<div class="ln" style="top:354px">14</div>
<div class="cl" style="top:354px"><span class="g">  int v14</span><span class="k">; </span><span class="c">// r14d</span></div>
<div class="ln" style="top:368px">15</div>
<div class="cl" style="top:368px"><span class="k">  char v15; </span><span class="c">// al</span></div>
<div class="ln" style="top:382px">16</div>
<div class="cl" style="top:382px"><span class="k">  __int64 v16; </span><span class="c">// rdx</span></div>
<div class="ln" style="top:396px">17</div>
<div class="cl" style="top:396px"><span class="k">  unsigned __int64 v17; </span><span class="c">// rsi</span></div>
<div class="ln" style="top:410px">18</div>
<div class="cl" style="top:410px"><span class="k">  bool v18; </span><span class="c">// zf</span></div>
<div class="ln" style="top:424px">19</div>
<div class="cl" style="top:424px"><span class="k">  bool v19; </span><span class="c">// cf</span></div>
<div class="ln" style="top:438px">20</div>
<div class="cl" style="top:438px"><span class="k">  unsigned int v21; </span><span class="c">// [rsp+10h] [rbp-78h]</span></div>
<div class="ln" style="top:452px">21</div>
<div class="cl" style="top:452px"><span class="k">  char dest[16]; </span><span class="c">// [rsp+30h] [rbp-58h] BYREF</span></div>
<div class="ln" style="top:466px">22</div>
<div class="cl" style="top:466px"><span class="g">  __int128 v23</span><span class="k">; </span><span class="c">// [rsp+40h] [rbp-48h]</span></div>
<div class="ln" style="top:480px">23</div>
<div class="cl" style="top:480px"><span class="k">  unsigned __int64 v24; </span><span class="c">// [rsp+50h] [rbp-38h]</span></div>
<div class="ln" style="top:494px">24</div>
<div class="ln" style="top:508px">25</div>
<div class="dot" style="top:512px"></div>
<div class="cl" style="top:508px"><span class="v">  v24</span><span class="k"> = </span><span class="f">__readfsqword</span><span class="k">(0x28u);</span></div>
<div class="ln" style="top:522px">26</div>
<div class="dot" style="top:526px"></div>
<div class="cl" style="top:522px"><span class="v">  v3</span><span class="k"> = (</span><span class="g">const char *</span><span class="k">)(*(</span><span class="g">__int64 (__fastcall **)(__int64, __int64, _QWORD)</span><span class="k">)(*(</span><span class="g">_QWORD *</span><span class="k">)</span><span class="v">a1</span><span class="k"> + 1352LL))(</span><span class="v">a1</span><span class="k">, </span><span class="v">a3</span><span class="k">, 0LL);</span></div>
<div class="ln" style="top:536px">27</div>
<div class="dot" style="top:540px"></div>
<div class="cl" style="top:536px"><span class="f">  __android_log_print</span><span class="k">(4LL, </span><span class="s">"native"</span><span class="k">, </span><span class="s">"input:%s"</span><span class="k">, </span><span class="v">v3</span><span class="k">);</span></div>
<div class="ln" style="top:550px">28</div>
<div class="dot" style="top:554px"></div>
<div class="cl" style="top:550px"><span class="v">  v23</span><span class="k"> = 0LL;</span></div>
<div class="ln" style="top:564px">29</div>
<div class="dot" style="top:568px"></div>
<div class="cl" style="top:564px"><span class="k">  *(</span><span class="g">_OWORD *</span><span class="k">)</span><span class="v">dest</span><span class="k"> = 0LL;</span></div>
<div class="ln" style="top:578px">30</div>
<div class="dot" style="top:582px"></div>
<div class="cl" style="top:578px"><span class="f">  strncpy</span><span class="k">(</span><span class="v">dest</span><span class="k">, </span><span class="v">v3</span><span class="k">, 0x20uLL);</span></div>
<div class="ln" style="top:592px">31</div>
<div class="dot" style="top:596px"></div>
<div class="cl" style="top:592px"><span class="v">  v4</span><span class="k"> = </span><span class="f">HIDWORD</span><span class="k">(</span><span class="v">v23</span><span class="k">);</span></div>
<div class="ln" style="top:606px">32</div>
<div class="dot" style="top:610px"></div>
<div class="cl" style="top:606px"><span class="v">  v5</span><span class="k"> = *(</span><span class="g">_DWORD *</span><span class="k">)</span><span class="v">dest</span><span class="k">;</span></div>
<div class="ln" style="top:620px">33</div>
<div class="dot" style="top:624px"></div>
<div class="cl" style="top:620px"><span class="v">  v6</span><span class="k"> = *(</span><span class="g">_DWORD *</span><span class="k">)&amp;</span><span class="v">dest</span><span class="k">[4];</span></div>
<div class="ln" style="top:634px">34</div>
<div class="dot" style="top:638px"></div>
<div class="cl" style="top:634px"><span class="v">  v7</span><span class="k"> = *(</span><span class="g">_DWORD *</span><span class="k">)&amp;</span><span class="v">dest</span><span class="k">[12];</span></div>
<div class="ln" style="top:648px">35</div>
<div class="dot" style="top:652px"></div>
<div class="cl" style="top:648px"><span class="v">  v8</span><span class="k"> = </span><span class="v">v23</span><span class="k">;</span></div>
<div class="ln" style="top:662px">36</div>
<div class="dot" style="top:666px"></div>
<div class="cl" style="top:662px"><span class="v">  v9</span><span class="k"> = </span><span class="f">DWORD1</span><span class="k">(</span><span class="v">v23</span><span class="k">);</span></div>
<div class="ln" style="top:676px">37</div>
<div class="dot" style="top:680px"></div>
<div class="cl" style="top:676px"><span class="v">  v10</span><span class="k"> = </span><span class="f">DWORD2</span><span class="k">(</span><span class="v">v23</span><span class="k">);</span></div>
<div class="ln" style="top:690px">38</div>
<div class="dot" style="top:694px"></div>
<div class="cl" style="top:690px"><span class="v">  v11</span><span class="k"> = *(</span><span class="g">_DWORD *</span><span class="k">)&amp;</span><span class="v">dest</span><span class="k">[8];</span></div>
<div class="ln" style="top:704px">39</div>
<div class="dot" style="top:708px"></div>
<div class="cl" style="top:704px"><span class="k">  for ( </span><span class="v">i</span><span class="k"> = 114514; </span><span class="v">i</span><span class="k"> != 1488682; </span><span class="v">i</span><span class="k"> += 114514 )</span></div>
<div class="ln" style="top:718px">40</div>
<div class="cl" style="top:718px"><span class="k">  {</span></div>
<div class="ln" style="top:732px">41</div>
<div class="dot" style="top:736px"></div>
<div class="cl" style="top:732px"><span class="v">    v21</span><span class="k"> = </span><span class="v">v8</span><span class="k">;</span></div>
<div class="ln" style="top:746px">42</div>
<div class="dot" style="top:750px"></div>
<div class="cl" style="top:746px"><span class="v">    v13</span><span class="k"> = (</span><span class="v">i</span><span class="k"> &gt;&gt; 2) &amp; 3;</span></div>
<div class="ln" style="top:760px">43</div>
<div class="dot" style="top:764px"></div>
<div class="cl" style="top:760px"><span class="v">    v14</span><span class="k"> = *(</span><span class="g">_DWORD *</span><span class="k">)&amp;</span><span class="f">aThisisaxxteake</span><span class="k">[4 * </span><span class="v">v13</span><span class="k">];</span></div>
<div class="ln" style="top:774px">44</div>
<div class="dot" style="top:778px"></div>
<div class="cl" style="top:774px"><span class="v">    v5</span><span class="k"> += (((</span><span class="v">v4</span><span class="k"> &gt;&gt; 5) ^ (4 * </span><span class="v">v6</span><span class="k">)) + ((</span><span class="v">v6</span><span class="k"> &gt;&gt; 3) ^ (16 * </span><span class="v">v4</span><span class="k">))) ^ ((</span><span class="v">i</span><span class="k"> ^ </span><span class="v">v6</span><span class="k">) + (</span><span class="v">v14</span><span class="k"> ^ </span><span class="v">v4</span><span class="k">));</span></div>
<div class="ln" style="top:788px">45</div>
<div class="dot" style="top:792px"></div>
<div class="cl" style="top:788px"><span class="v">    v6</span><span class="k"> += (((</span><span class="v">v5</span><span class="k"> &gt;&gt; 5) ^ (4 * </span><span class="v">v11</span><span class="k">)) + ((</span><span class="v">v11</span><span class="k"> &gt;&gt; 3) ^ (16 * </span><span class="v">v5</span><span class="k">))) ^ ((</span><span class="v">i</span><span class="k"> ^ </span><span class="v">v11</span><span class="k">)</span></div>
<div class="ln" style="top:802px">46</div>
<div class="cl" style="top:802px"><span class="k">                                                                + (</span><span class="v">v5</span><span class="k"> ^ *(</span><span class="g">_DWORD *</span><span class="k">)&amp;</span><span class="f">aThisisaxxteake</span><span class="k">[4 * ((</span><span class="v">i</span><span class="k"> &gt;&gt; 2) &amp; 3 ^ 1)]));</span></div>
<div style="left:429px;top:819px;width:1476px;height:19px;background:#efefef"></div>
<div class="mono" style="left:431px;top:824px;color:#3c3c3c;letter-spacing:-0.03px">00000AA0 Java_work_pangbai_ohnativeenc_FirstFragment_checkFlag:1 (AA0)</div>
<div style="left:428px;top:838px;width:1492px;height:1px;background:#c0c0c0"></div>
<!-- code v scrollbar -->
<div class="sbv" style="left:1905px;top:172px;height:666px"></div>
<div style="left:1906px;top:172px;width:13px;height:14px;background:#f6f6f6;border-bottom:1px solid #c8c8c8"></div>
<div style="left:1906px;top:824px;width:13px;height:14px;background:#f6f6f6;border-top:1px solid #c8c8c8"></div>
<svg style="left:1908px;top:176px" width="10" height="6"><path d="M0.5 5.5h8l-4-4.5z" fill="#4a4a4a"/></svg>
<svg style="left:1908px;top:828px" width="10" height="6"><path d="M0.5 0.5h8l-4 4.5z" fill="#4a4a4a"/></svg>

<!-- ===== Output dock ===== -->
<div class="dt" style="left:0;top:843px;width:1920px;height:30px"><div class="t" id="dtO" style="top:5px">Output</div></div>
<div style="left:0;top:875px;width:1920px;height:117px;border:1px solid #bdbdbd;background:#fff"></div>
<div id="ov">
<div class="ol" style="top:-11px">Python 3.12.3 (main, Aug 14 2025, 17:47:21) [GCC 13.3.0]</div>
<div class="ol" style="top:4px">IDAPython 64-bit v9.0.0 final (serial 0) (c) The IDAPython Team &lt;idapython@googlegroups.com&gt;</div>
<svg style="left:6px;top:17px" width="740" height="14"><path d="M0.4 7.4H724.8" stroke="#000" stroke-width="1.7" stroke-dasharray="6.9 0.9"/></svg>
<div class="ol" style="top:32px">Propagating type information...</div>
<div class="ol" style="top:46px">Function argument information has been propagated</div>
<div class="ol" style="top:60px">lumina: Signature decryption failed with code: -2</div>
<div class="ol" style="top:74px">The initial autoanalysis has been finished.</div>
<div class="ol" style="top:88px">E30: using guessed type __int64 __android_log_print(_QWORD, _QWORD, const char *, ...);</div>
<div class="ol" style="top:102px">3080: using guessed type _BYTE mm[32];</div>
</div>
<div class="sbv" style="left:1905px;top:876px;height:115px;background:#f6f6f6"></div>
<div style="left:1906px;top:889px;width:13px;height:61px;background:#e0e0e0;border-top:1px solid #c8c8c8;border-bottom:1px solid #c8c8c8"></div>
<div style="left:1906px;top:977px;width:13px;height:14px;background:#f6f6f6;border-top:1px solid #c8c8c8"></div>
<svg style="left:1908px;top:880px" width="10" height="6"><path d="M0.5 5.5h8l-4-4.5z" fill="#4a4a4a"/></svg>
<svg style="left:1908px;top:982px" width="10" height="6"><path d="M0.5 0.5h8l-4 4.5z" fill="#4a4a4a"/></svg>
<div style="left:1919px;top:876px;width:1px;height:115px;background:#c8c8c8"></div>

<!-- python line -->
<div style="left:1px;top:994px;width:66px;height:23px;border:1px solid #c0c0c0;border-radius:3px;background:linear-gradient(#fdfdfd,#efefef)"></div>
<div class="t" style="left:13px;top:997px;font-size:13.4px;color:#1e1e1e" id="py">Python</div>
<div style="left:70px;top:994px;width:1849px;height:23px;border:1px solid #b8b8b8;border-radius:3px;background:#fff"></div>

<!-- status bar -->
<div class="mono" style="left:2px;top:1024px;color:#3c3c3c">AU:  idle</div><div class="mono" style="left:94px;top:1024px;color:#3c3c3c">Down</div>
<div class="mono" style="left:170px;top:1024px;color:#3c3c3c">Disk: 857GB</div>

<svg style="left:0;top:0;pointer-events:none" width="1920" height="1040" fill="#b4b4b4" shape-rendering="crispEdges"><rect x="953" y="135" width="1" height="1"/><rect x="953" y="841" width="1" height="1"/><rect x="185" y="697" width="1" height="1"/><rect x="385" y="483" width="1" height="1"/><rect x="956" y="135" width="1" height="1"/><rect x="956" y="841" width="1" height="1"/><rect x="188" y="697" width="1" height="1"/><rect x="385" y="486" width="1" height="1"/><rect x="959" y="135" width="1" height="1"/><rect x="959" y="841" width="1" height="1"/><rect x="191" y="697" width="1" height="1"/><rect x="385" y="489" width="1" height="1"/><rect x="962" y="135" width="1" height="1"/><rect x="962" y="841" width="1" height="1"/><rect x="194" y="697" width="1" height="1"/><rect x="385" y="492" width="1" height="1"/><rect x="965" y="135" width="1" height="1"/><rect x="965" y="841" width="1" height="1"/><rect x="197" y="697" width="1" height="1"/><rect x="385" y="495" width="1" height="1"/><rect x="968" y="135" width="1" height="1"/><rect x="968" y="841" width="1" height="1"/><rect x="200" y="697" width="1" height="1"/><rect x="385" y="498" width="1" height="1"/><rect x="426" y="498" width="1" height="1"/><rect x="426" y="501" width="1" height="1"/><rect x="426" y="504" width="1" height="1"/><rect x="426" y="507" width="1" height="1"/><rect x="426" y="510" width="1" height="1"/><rect x="426" y="513" width="1" height="1"/></svg>
<svg style="left:0;top:732px" width="383" height="107" viewBox="0 732 383 107"><rect x="181.3" y="732" width="19.2" height="5" fill="#6b8b90"/><rect x="170" y="737" width="37" height="15" fill="#fff"/><rect x="181.3" y="737" width="19.2" height="15" fill="#9ecfd0"/><path d="M181.3 732v20h19.2v-20" fill="none" stroke="#4a5a5c" stroke-width="0.6"/><rect x="0" y="744" width="170" height="1" fill="#ffff00"/><rect x="207" y="744" width="176" height="1" fill="#ffff00"/><rect x="183.4" y="752.3" width="9.3" height="55.7" fill="#b2b2b2" stroke="#4c4c4c" stroke-width="0.7"/><path d="M183.4 752.3v55.7" stroke="#2f6f2f" stroke-width="0.8"/><rect x="183.4" y="808.5" width="9.3" height="5.6" fill="#b2b2b2" stroke="#4c4c4c" stroke-width="0.7"/><rect x="185.5" y="814.5" width="7" height="4" fill="#b8b8b8" stroke="#4c4c4c" stroke-width="0.6"/><rect x="186" y="819" width="12.5" height="7" fill="none" stroke="#3a8a3a" stroke-width="0.6"/><rect x="185" y="822" width="10" height="8.5" fill="none" stroke="#3a8a3a" stroke-width="0.6"/><rect x="189.5" y="822" width="6.5" height="3.4" fill="#b8b8b8" stroke="#4c4c4c" stroke-width="0.6"/><path d="M190 823.5h5" stroke="#c03030" stroke-width="0.8"/><rect x="185.5" y="826.5" width="7" height="3.4" fill="#b8b8b8" stroke="#4c4c4c" stroke-width="0.6"/><path d="M186 828h4" stroke="#3030c0" stroke-width="0.8"/><rect x="181.4" y="833.2" width="15.2" height="4.4" fill="#b8b8b8" stroke="#4c4c4c" stroke-width="0.7"/><path d="M182 835h3" stroke="#c03030" stroke-width="0.8"/><rect x="188" y="732" width="1" height="106" fill="#ffff00"/></svg><i class="fi" style="left:4px;top:145px"><b></b><u>f</u></i><svg style="left:5px;top:705px" width="14" height="18" viewBox="0 0 14 18"><rect x="4.6" y="1.5" width="4.6" height="4" fill="#f4f4f4" stroke="#5a5a5a" stroke-width="1.1"/><path d="M6.9 5.5v2.2M2 10.2v-2.5h10v2.5M6.9 7.7v2.5" stroke="#5a5a5a" stroke-width="1.1" fill="none"/><rect x="0.8" y="10.3" width="2.6" height="5.6" rx="1" fill="#f4f4f4" stroke="#5a5a5a" stroke-width="1.1"/><rect x="5.6" y="10.3" width="2.6" height="5.6" rx="1" fill="#f4f4f4" stroke="#5a5a5a" stroke-width="1.1"/><rect x="10.4" y="10.3" width="2.6" height="5.6" rx="1" fill="#f4f4f4" stroke="#5a5a5a" stroke-width="1.1"/></svg><svg width="16" height="16" viewBox="0 0 16 16" style="left:4px;top:849px"><rect x="0.5" y="0.5" width="15" height="15" rx="1.5" fill="#fcfcfc"/><rect x="1" y="1" width="14" height="2.5" fill="#12d8ff"/><path d="M1 3.8h14" stroke="#6e8890" stroke-width="0.5"/><rect x="0.5" y="0.5" width="15" height="15" rx="1.5" fill="none" stroke="#7e7e7e" stroke-width="1"/><rect x="2.7" y="4.6" width="10.6" height="9.8" rx="1.6" fill="#cecece" stroke="#aeaeae" stroke-width="0.5"/><rect x="4.2" y="5.2" width="7.8" height="8.8" rx="0.8" fill="#f4f4f4"/><circle cx="5.5" cy="6.5" r="0.8" fill="#1a78b8"/><path d="M7.2 6.5h4.2" stroke="#1a1a1a" stroke-width="0.9" stroke-linecap="round"/><circle cx="5.5" cy="8.5" r="0.8" fill="#1a78b8"/><path d="M7.2 8.5h4.2" stroke="#1a1a1a" stroke-width="0.9" stroke-linecap="round"/><circle cx="5.5" cy="10.5" r="0.8" fill="#1a78b8"/><path d="M7.2 10.5h4.2" stroke="#1a1a1a" stroke-width="0.9" stroke-linecap="round"/><circle cx="5.5" cy="12.5" r="0.8" fill="#1a78b8"/><path d="M7.2 12.5h4.2" stroke="#1a1a1a" stroke-width="0.9" stroke-linecap="round"/></svg>
<svg style="left:311px;top:147px" width="66" height="14" viewBox="311 147 66 14"><rect x="312.5" y="150" width="8" height="9.4" fill="none" stroke="#5c5a56" stroke-width="1"/><rect x="312" y="149" width="9" height="2" fill="#5c5a56"/><rect x="337.6" y="149.5" width="9.8" height="10" rx="2.6" fill="none" stroke="#5c5a56" stroke-width="1"/><path d="M341.4 153.4v-0.9q0-1 1-1h2.2q1 0 1 1v2.2q0 1-1 1h-0.9" fill="none" stroke="#5c5a56" stroke-width="0.9"/><rect x="339.6" y="153.6" width="4.2" height="4.2" rx="1" fill="none" stroke="#5c5a56" stroke-width="0.9"/><rect x="363.5" y="149.5" width="10" height="10" rx="2.6" fill="none" stroke="#5c5a56" stroke-width="1"/><path d="M365.7 151.7l5.6 5.6M371.3 151.7l-5.6 5.6" stroke="#5c5a56" stroke-width="1.7"/></svg><svg style="left:311px;top:708px" width="66" height="14" viewBox="311 147 66 14"><rect x="312.5" y="150" width="8" height="9.4" fill="none" stroke="#5c5a56" stroke-width="1"/><rect x="312" y="149" width="9" height="2" fill="#5c5a56"/><rect x="337.6" y="149.5" width="9.8" height="10" rx="2.6" fill="none" stroke="#5c5a56" stroke-width="1"/><path d="M341.4 153.4v-0.9q0-1 1-1h2.2q1 0 1 1v2.2q0 1-1 1h-0.9" fill="none" stroke="#5c5a56" stroke-width="0.9"/><rect x="339.6" y="153.6" width="4.2" height="4.2" rx="1" fill="none" stroke="#5c5a56" stroke-width="0.9"/><rect x="363.5" y="149.5" width="10" height="10" rx="2.6" fill="none" stroke="#5c5a56" stroke-width="1"/><path d="M365.7 151.7l5.6 5.6M371.3 151.7l-5.6 5.6" stroke="#5c5a56" stroke-width="1.7"/></svg><svg style="left:1848px;top:851px" width="66" height="14" viewBox="311 147 66 14"><rect x="312.5" y="150" width="8" height="9.4" fill="none" stroke="#5c5a56" stroke-width="1"/><rect x="312" y="149" width="9" height="2" fill="#5c5a56"/><rect x="337.6" y="149.5" width="9.8" height="10" rx="2.6" fill="none" stroke="#5c5a56" stroke-width="1"/><path d="M341.4 153.4v-0.9q0-1 1-1h2.2q1 0 1 1v2.2q0 1-1 1h-0.9" fill="none" stroke="#5c5a56" stroke-width="0.9"/><rect x="339.6" y="153.6" width="4.2" height="4.2" rx="1" fill="none" stroke="#5c5a56" stroke-width="0.9"/><rect x="363.5" y="149.5" width="10" height="10" rx="2.6" fill="none" stroke="#5c5a56" stroke-width="1"/><path d="M365.7 151.7l5.6 5.6M371.3 151.7l-5.6 5.6" stroke="#5c5a56" stroke-width="1.7"/></svg>
</body></html>
